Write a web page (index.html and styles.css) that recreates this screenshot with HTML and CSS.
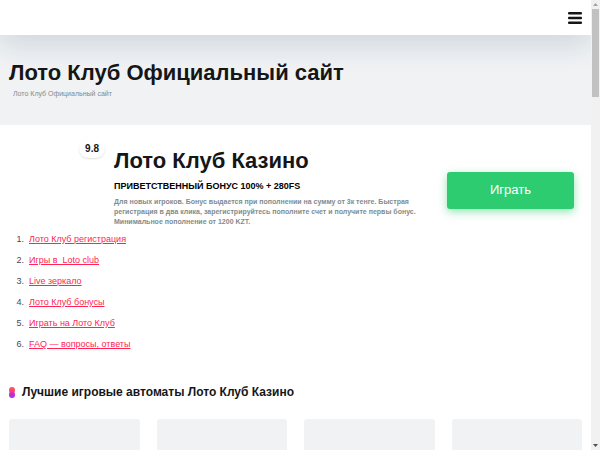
FILE: index.html
```html
<!DOCTYPE html>
<html lang="ru">
<head>
<meta charset="utf-8">
<meta name="viewport" content="width=device-width, initial-scale=1">
<title>Лото Клуб Официальный сайт</title>
<link rel="stylesheet" href="styles.css">
</head>
<body>
<div class="page">
  <header class="topbar">
    <button class="menu" type="button" aria-label="Меню">
      <svg viewBox="0 0 14 12" width="14" height="12" aria-hidden="true"><rect width="14" height="2.4" rx="1"/><rect y="4.8" width="14" height="2.4" rx="1"/><rect y="9.6" width="14" height="2.4" rx="1"/></svg>
    </button>
  </header>
  <section class="hero">
    <h1>Лото Клуб Официальный сайт</h1>
    <p class="crumbs">Лото Клуб Официальный сайт</p>
  </section>
  <main>
    <section class="offer">
      <div class="rating"><span>9.8</span></div>
      <div class="info">
        <h2>Лото Клуб Казино</h2>
        <p class="bonus">ПРИВЕТСТВЕННЫЙ БОНУС 100% + 280FS</p>
        <p class="terms">Для новых игроков. Бонус выдается при пополнении на сумму от 3к тенге. Быстрая регистрация в два клика, зарегистрируйтесь пополните счет и получите первы бонус. Минимальное пополнение от 1200 KZT.</p>
      </div>
      <button class="play" type="button">Играть</button>
    </section>
    <ol class="contents">
      <li><a href="#registration">Лото Клуб регистрация</a></li>
      <li><a href="#games">Игры в&nbsp; Loto club</a></li>
      <li><a href="#mirror">Live зеркало</a></li>
      <li><a href="#bonuses">Лото Клуб бонусы</a></li>
      <li><a href="#play">Играть на Лото Клуб</a></li>
      <li><a href="#faq">FAQ — вопросы, ответы</a></li>
    </ol>
    <section class="slots">
      <h3>
        <svg viewBox="0 0 6 11" width="6" height="11" aria-hidden="true"><circle cx="3" cy="3" r="3" fill="#ff4f70"/><circle cx="3" cy="8" r="3" fill="#b02df0"/><path d="M.3 6.8A3 3 0 0 1 .3 4.200A3 3 0 0 1 5.700 4.200A3 3 0 0 1 5.700 6.800A3 3 0 0 1 .3 6.800z" fill="#f0307f" opacity=".5"/></svg>
        Лучшие игровые автоматы Лото Клуб Казино
      </h3>
      <div class="cards">
        <div class="card"></div><div class="card"></div><div class="card"></div><div class="card"></div>
      </div>
    </section>
  </main>
</div>
<div class="scrollbar" aria-hidden="true">
  <svg viewBox="0 0 9 9" width="9" height="9"><path d="M2 6 4.500 3 7 6z" fill="#a3a3a3"/></svg>
  <div class="thumb"></div>
  <svg class="down" viewBox="0 0 9 9" width="9" height="9"><path d="M2 3 4.500 6 7 3z" fill="#505050"/></svg>
</div>
</body>
</html>
```
FILE: styles.css
```css
* { box-sizing: border-box; }
body {
  margin: 0;
  display: flex;
  height: 100vh;
  overflow: hidden;
  background: #fff;
  color: #151617;
  font-family: "Liberation Sans", Arial, sans-serif;
}
h1, h2, h3, p { margin: 0; }
.page { flex: 1; min-width: 0; overflow: hidden; }
.topbar {
  position: relative;
  display: flex;
  align-items: center;
  justify-content: flex-end;
  height: 35px;
  padding: 0 9px;
  background: #fff;
  box-shadow: 0 8px 30px rgba(0, 50, 90, 0.16);
}
.menu {
  display: flex;
  padding: 0;
  border: 0;
  background: none;
  fill: #151617;
}
.hero { padding: 24px 9px 25px; background: #f0f2f4; }
.hero h1, .info h2 { font-size: 22px; line-height: 28px; }
.crumbs { padding-left: 4px; color: #7f8c8d; font-size: 7px; line-height: 13px; }
.offer {
  display: grid;
  grid-template-columns: 96px 1fr 127px;
  column-gap: 9px;
  padding: 14px 17px 0 9px;
}
.rating { display: flex; justify-content: flex-end; align-items: flex-start; }
.rating span {
  padding: 0 6px;
  border-radius: 10px;
  box-shadow: 0 1px 2px rgba(0, 0, 0, 0.12);
  font-size: 10px;
  font-weight: 700;
  line-height: 19px;
}
.info { padding-top: 8px; }
.bonus { color: #000; font-size: 9px; font-weight: 700; line-height: 22px; }
.terms { color: #7f8c8d; font-size: 7px; font-weight: 700; line-height: 10px; }
.play {
  height: 37px;
  margin-top: 33px;
  padding: 0 0 2px;
  border: 0;
  border-radius: 3px;
  background: #2ecc71;
  box-shadow: 0 3px 9px rgba(46, 204, 113, 0.5);
  color: #fff;
  font-family: inherit;
  font-size: 13px;
}
.contents {
  margin: 0;
  padding: 2px 9px 0 29px;
  color: #43485c;
  font-size: 9px;
  line-height: 21px;
}
.contents li::marker { content: counter(list-item) ".\00a0\00a0"; }
.contents a { color: #ff2453; }
.slots { padding: 29px 9px 0; }
.slots h3 {
  display: flex;
  align-items: center;
  gap: 7px;
  font-size: 12px;
  line-height: 16px;
}
.cards {
  display: grid;
  grid-template-columns: repeat(4, 1fr);
  gap: 17px;
  padding-top: 19px;
}
.card { height: 130px; border-radius: 3px; background: #f0f2f4; }
.scrollbar {
  display: flex;
  flex-direction: column;
  width: 9px;
  background: #f1f1f1;
}
.thumb { height: 88px; margin: 0 1px; background: #c1c1c1; }
.down { margin-top: auto; }
```
